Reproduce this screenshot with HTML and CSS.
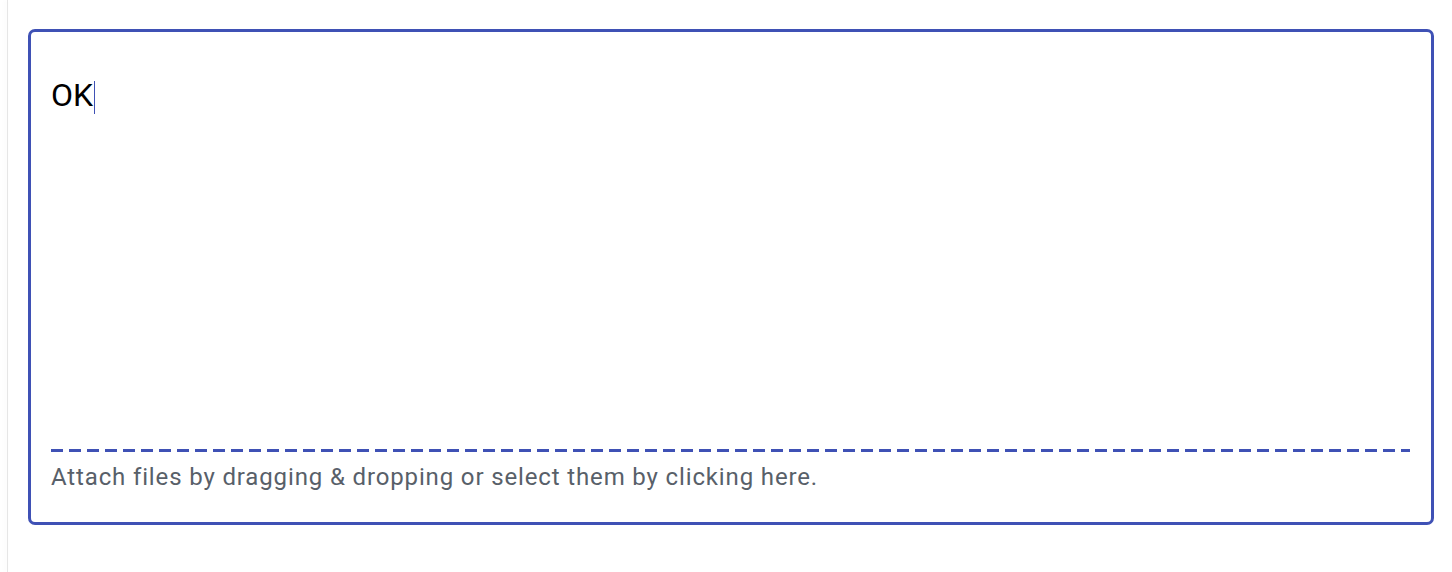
FILE: index.html
```html
<!DOCTYPE html>
<html>
<head>
<meta charset="utf-8">
<link rel="stylesheet" href="styles.css">
</head>
<body>
<div class="page">
  <div class="rail"></div>
  <div class="editor">
    <div class="input"><span class="value">OK</span><span class="caret"></span></div>
    <div class="dash"></div>
    <div class="hint">Attach files by dragging &amp; dropping or select them by clicking here.</div>
  </div>
</div>
</body>
</html>
```
FILE: styles.css
```css
html, body {
  margin: 0;
  padding: 0;
  background: #ffffff;
  font-family: Roboto, "Liberation Sans", sans-serif;
}
.page {
  display: flex;
  align-items: flex-start;
  height: 572px;
}
.rail {
  width: 1px;
  height: 572px;
  margin-left: 7px;
  background: #e6e6e6;
  box-shadow: -2px 0 4px rgba(0, 0, 0, 0.06);
}
.editor {
  flex: 1;
  margin: 29px 18px 0 20px;
  border: 3px solid #3f51b5;
  border-radius: 7px;
}
.input {
  height: 374px;
  padding: 43px 20px 0;
  font-size: 32px;
  line-height: 40px;
  color: #000;
  display: flex;
  align-items: flex-start;
}
.caret {
  display: inline-block;
  width: 1px;
  height: 33px;
  margin-top: 6px;
  margin-left: 1px;
  background: #3f51b5;
}
.dash {
  height: 3px;
  margin: 0 21px 0 20px;
  background: repeating-linear-gradient(90deg, #3f51b5 0 12px, transparent 12px 18px);
}
.hint {
  padding: 9px 20px 29px;
  font-size: 24px;
  line-height: 32px;
  letter-spacing: 0.86px;
  color: #586069;
}
```
